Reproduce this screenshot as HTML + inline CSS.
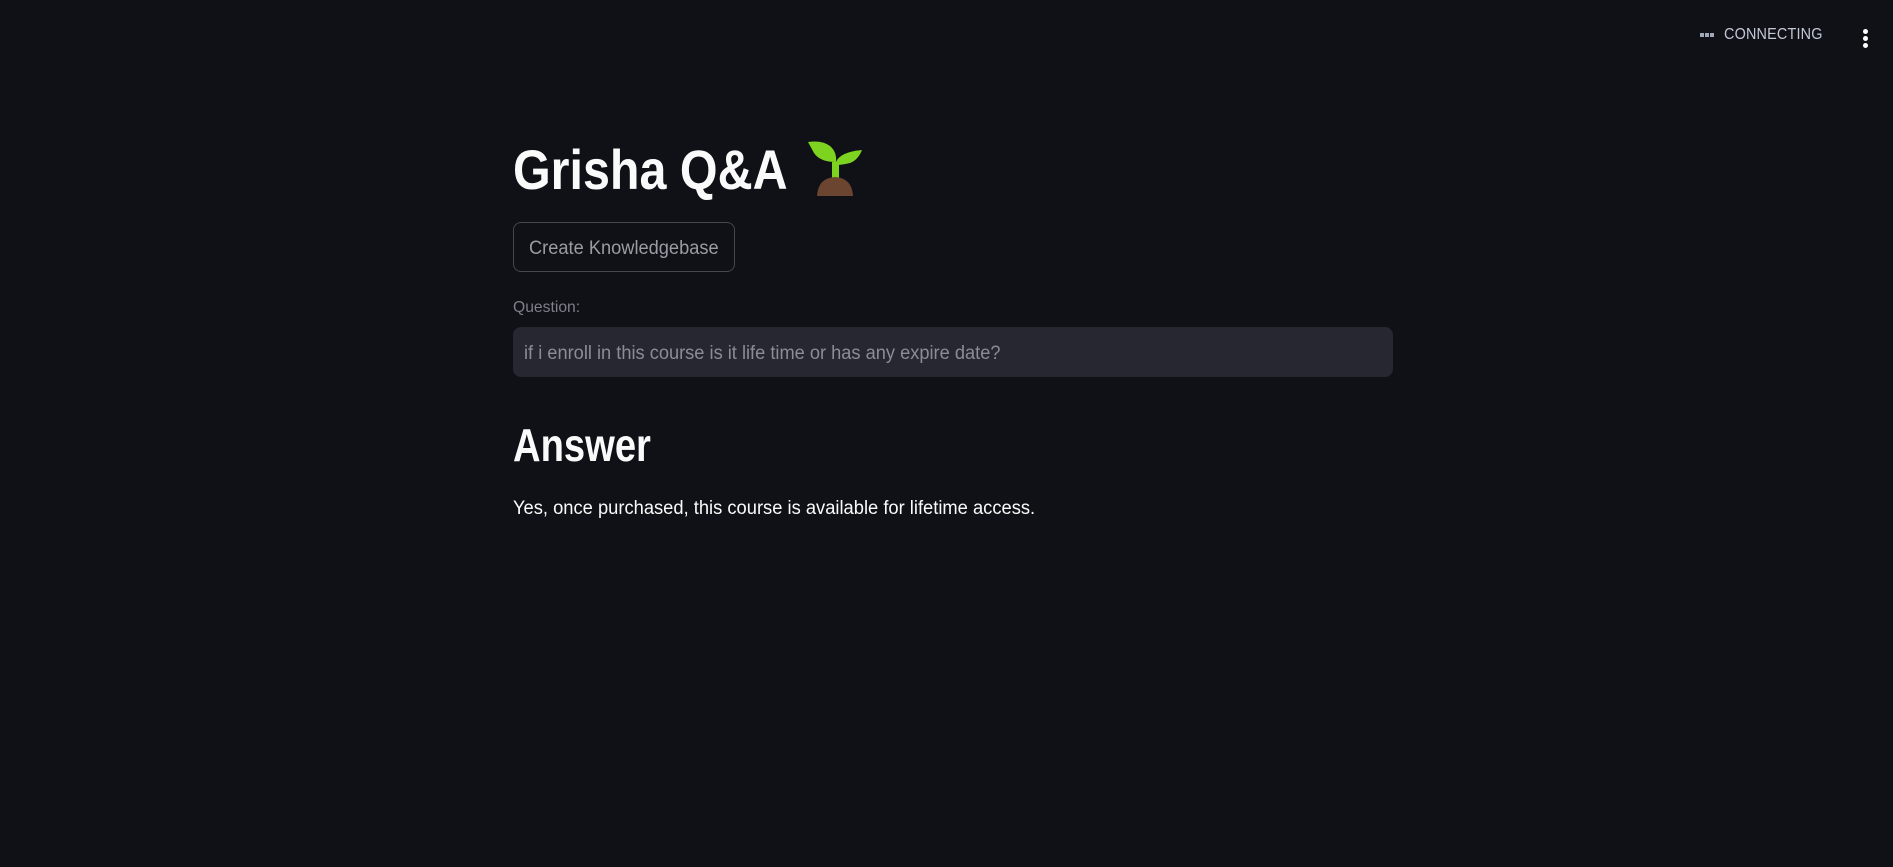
<!DOCTYPE html>
<html><head><style>
html,body{margin:0;padding:0;background:#0f1117;width:1893px;height:867px;overflow:hidden;font-family:"Liberation Sans",sans-serif;}
.abs{position:absolute;}
</style></head><body>
<div class="abs" style="left:1700px;top:33px;width:14px;height:4px;">
<div class="abs" style="left:0;top:0;width:4px;height:4px;background:#a3a8b8"></div>
<div class="abs" style="left:5px;top:0;width:4px;height:4px;background:#a3a8b8"></div>
<div class="abs" style="left:10px;top:0;width:4px;height:4px;background:#a3a8b8"></div>
</div>
<div class="abs" style="left:1724px;top:26px;font-size:16px;color:#c3c8d6;letter-spacing:0.2px;transform:scaleX(0.9);transform-origin:left;">CONNECTING</div>
<div class="abs" style="left:1863px;top:29px;width:5px;height:5px;border-radius:50%;background:#fff"></div>
<div class="abs" style="left:1863px;top:36px;width:5px;height:5px;border-radius:50%;background:#fff"></div>
<div class="abs" style="left:1863px;top:43px;width:5px;height:5px;border-radius:50%;background:#fff"></div>

<div class="abs" style="left:513px;top:137px;font-size:56px;font-weight:bold;color:#fafafa;transform:scaleX(0.865);transform-origin:left;white-space:nowrap;">Grisha Q&amp;A</div>
<svg class="abs" style="left:808px;top:140px" width="56" height="56" viewBox="0 0 56 56">
<path d="M24 52 L24 22 L31 22 L31 52 Z" fill="#7ed321"/>
<path d="M0 2 Q14 0 22 6 Q29 12 28 22 Q12 22 6 13 Z" fill="#7ed321"/>
<path d="M28 22 Q32 12 54 10 Q50 20 42 23 Q34 25 28 25 Z" fill="#7ed321"/>
<path d="M9 56 Q10 38 27 37 Q44 38 45 56 Z" fill="#6b4530"/>
</svg>

<div class="abs" style="left:513px;top:222px;width:220px;height:48px;border:1px solid #45474f;border-radius:8px;"></div>
<div class="abs" style="left:529px;top:238px;font-size:19px;color:#9a9ca3;transform:scaleX(0.96);transform-origin:left;white-space:nowrap;">Create Knowledgebase</div>

<div class="abs" style="left:513px;top:299px;font-size:16px;color:#7d8089;transform:scaleX(0.98);transform-origin:left;">Question:</div>
<div class="abs" style="left:513px;top:327px;width:880px;height:50px;background:#262730;border-radius:8px;"></div>
<div class="abs" style="left:524px;top:343px;font-size:19px;color:#8b8d95;transform:scaleX(0.96);transform-origin:left;white-space:nowrap;">if i enroll in this course is it life time or has any expire date?</div>

<div class="abs" style="left:513px;top:418px;font-size:46px;font-weight:bold;color:#fafafa;transform:scaleX(0.83);transform-origin:left;white-space:nowrap;">Answer</div>
<div class="abs" style="left:513px;top:498px;font-size:19px;color:#fafafa;transform:scaleX(0.965);transform-origin:left;white-space:nowrap;">Yes, once purchased, this course is available for lifetime access.</div>
</body></html>
